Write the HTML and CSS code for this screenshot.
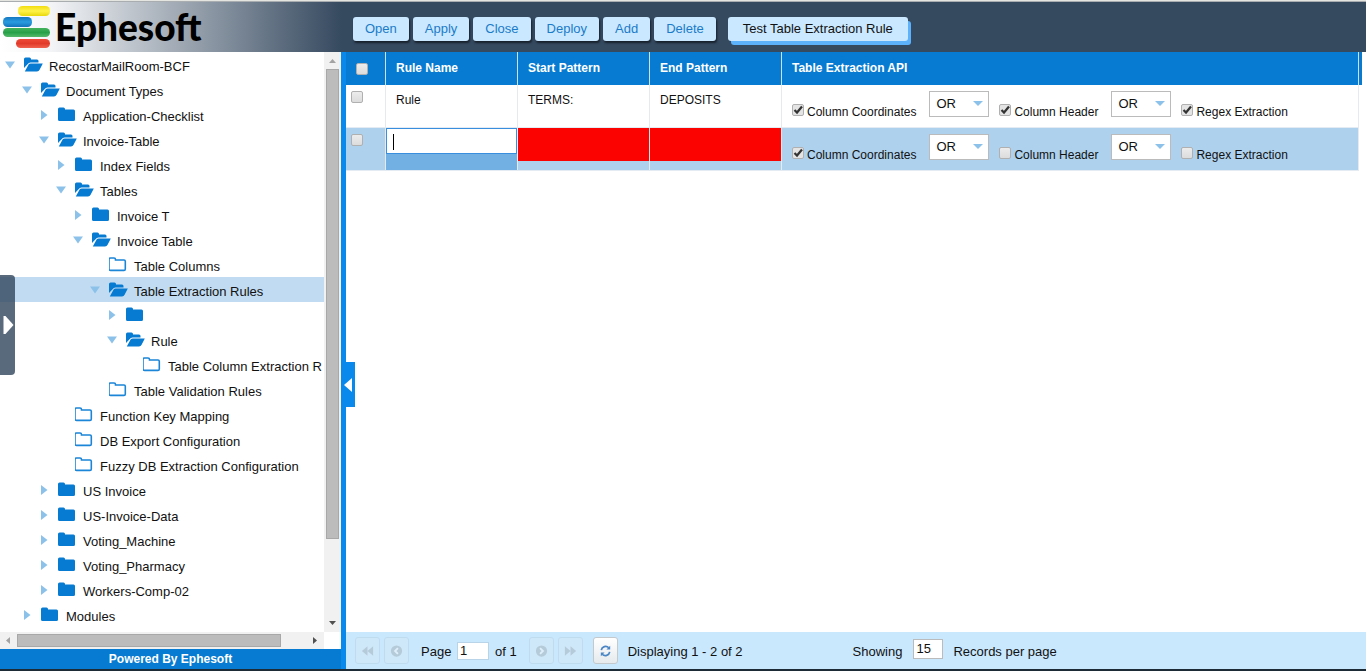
FILE: index.html
```html
<!DOCTYPE html>
<html lang="en">
<head>
<meta charset="utf-8">
<title>Ephesoft - Table Extraction Rules</title>
<link rel="stylesheet" href="styles.css">
</head>
<body>
<svg class="defs" aria-hidden="true">
  <symbol id="open" viewBox="0 0 19 15"><path fill="#077bd1" d="M0 11V2Q0 .5 1.500 .5H5.500Q7 .5 7 2V2.500H13Q14.500 2.500 14.500 4V5.500H6.500Q4.600 5.500 3.800 7ZM.8 14.500L4.600 7.500Q5.200 6.500 6.800 6.500H18.800L15.600 12.800Q14.800 14.500 13 14.500Z"/></symbol>
  <symbol id="closed" viewBox="0 0 19 15"><path fill="#077bd1" d="M0 2Q0 .5 1.500 .5H5.500Q7 .5 7 2V2.500H15.500Q17 2.500 17 4V12.500Q17 14 15.500 14H1.500Q0 14 0 12.500Z"/></symbol>
  <symbol id="leaf" viewBox="0 0 19 15"><path fill="#fff" stroke="#1b85d8" stroke-width="1.600" d="M0 2.500Q0 1 1.500 1H5Q6.500 1 6.500 2.500V3H15Q16.300 3 16.300 4.300V12Q16.300 13.400 15 13.400H1.500Q0 13.400 0 12Z"/></symbol>
  <symbol id="down" viewBox="0 0 10 10"><path fill="#8cc2ea" d="M0 1.500H10L5 8.500Z"/></symbol>
  <symbol id="right" viewBox="0 0 10 10"><path fill="#8cc2ea" d="M2 0L8.500 5L2 10Z"/></symbol>
</svg>

<header class="topbar">
  <div class="brand">
    <svg class="brand-mark" viewBox="0 0 48 44" aria-hidden="true">
      <defs>
        <linearGradient id="gy" x2="0" y2="1"><stop offset="0" stop-color="#f2dc10"/><stop offset=".5" stop-color="#fff34a"/><stop offset="1" stop-color="#e8d80c"/></linearGradient>
        <linearGradient id="gb" x2="0" y2="1"><stop offset="0" stop-color="#1577c0"/><stop offset=".5" stop-color="#2a9ce0"/><stop offset="1" stop-color="#1472ba"/></linearGradient>
        <linearGradient id="gg" x2="0" y2="1"><stop offset="0" stop-color="#43b35c"/><stop offset=".5" stop-color="#27a048"/><stop offset="1" stop-color="#55b96a"/></linearGradient>
        <linearGradient id="gr" x2="0" y2="1"><stop offset="0" stop-color="#ee4a38"/><stop offset=".5" stop-color="#e23a2a"/><stop offset="1" stop-color="#f0604e"/></linearGradient>
      </defs>
      <rect x="15" y="1" width="32" height="10" rx="4.500" fill="url(#gy)"/>
      <rect x="0" y="12" width="29" height="10" rx="4.500" fill="url(#gb)"/>
      <rect x="0" y="23" width="47" height="9" rx="4.500" fill="url(#gg)"/>
      <rect x="13" y="34" width="34" height="9" rx="4.500" fill="url(#gr)"/>
    </svg>
    <span class="brand-name">Ephesoft</span>
  </div>
  <nav class="actions">
    <button>Open</button><button>Apply</button><button>Close</button><button>Deploy</button><button>Add</button><button>Delete</button><button class="test">Test Table Extraction Rule</button>
  </nav>
</header>

<div class="workspace">
  <aside class="sidebar">
    <div class="tree-area">
      <ul class="tree">
        <li class="l0"><svg class="arrow"><use href="#down"/></svg><svg class="folder"><use href="#open"/></svg><span>RecostarMailRoom-BCF</span></li>
        <li class="l1"><svg class="arrow"><use href="#down"/></svg><svg class="folder"><use href="#open"/></svg><span>Document Types</span></li>
        <li class="l2"><svg class="arrow"><use href="#right"/></svg><svg class="folder"><use href="#closed"/></svg><span>Application-Checklist</span></li>
        <li class="l2"><svg class="arrow"><use href="#down"/></svg><svg class="folder"><use href="#open"/></svg><span>Invoice-Table</span></li>
        <li class="l3"><svg class="arrow"><use href="#right"/></svg><svg class="folder"><use href="#closed"/></svg><span>Index Fields</span></li>
        <li class="l3"><svg class="arrow"><use href="#down"/></svg><svg class="folder"><use href="#open"/></svg><span>Tables</span></li>
        <li class="l4"><svg class="arrow"><use href="#right"/></svg><svg class="folder"><use href="#closed"/></svg><span>Invoice T</span></li>
        <li class="l4"><svg class="arrow"><use href="#down"/></svg><svg class="folder"><use href="#open"/></svg><span>Invoice Table</span></li>
        <li class="l5"><svg class="arrow"></svg><svg class="folder"><use href="#leaf"/></svg><span>Table Columns</span></li>
        <li class="l5 selected"><svg class="arrow"><use href="#down"/></svg><svg class="folder"><use href="#open"/></svg><span>Table Extraction Rules</span></li>
        <li class="l6"><svg class="arrow"><use href="#right"/></svg><svg class="folder"><use href="#closed"/></svg><span></span></li>
        <li class="l6"><svg class="arrow"><use href="#down"/></svg><svg class="folder"><use href="#open"/></svg><span>Rule</span></li>
        <li class="l7"><svg class="arrow"></svg><svg class="folder"><use href="#leaf"/></svg><span>Table Column Extraction R</span></li>
        <li class="l5"><svg class="arrow"></svg><svg class="folder"><use href="#leaf"/></svg><span>Table Validation Rules</span></li>
        <li class="l3"><svg class="arrow"></svg><svg class="folder"><use href="#leaf"/></svg><span>Function Key Mapping</span></li>
        <li class="l3"><svg class="arrow"></svg><svg class="folder"><use href="#leaf"/></svg><span>DB Export Configuration</span></li>
        <li class="l3"><svg class="arrow"></svg><svg class="folder"><use href="#leaf"/></svg><span>Fuzzy DB Extraction Configuration</span></li>
        <li class="l2"><svg class="arrow"><use href="#right"/></svg><svg class="folder"><use href="#closed"/></svg><span>US Invoice</span></li>
        <li class="l2"><svg class="arrow"><use href="#right"/></svg><svg class="folder"><use href="#closed"/></svg><span>US-Invoice-Data</span></li>
        <li class="l2"><svg class="arrow"><use href="#right"/></svg><svg class="folder"><use href="#closed"/></svg><span>Voting_Machine</span></li>
        <li class="l2"><svg class="arrow"><use href="#right"/></svg><svg class="folder"><use href="#closed"/></svg><span>Voting_Pharmacy</span></li>
        <li class="l2"><svg class="arrow"><use href="#right"/></svg><svg class="folder"><use href="#closed"/></svg><span>Workers-Comp-02</span></li>
        <li class="l1"><svg class="arrow"><use href="#right"/></svg><svg class="folder"><use href="#closed"/></svg><span>Modules</span></li>
        <li class="l1"><svg class="arrow"></svg><svg class="folder"><use href="#closed"/></svg><span></span></li>
      </ul>
      <div class="scroll-y" aria-hidden="true">
        <svg viewBox="0 0 17 17"><path fill="#a3a3a3" d="M5 11H12L8.500 7Z"/></svg>
        <div class="track"><div class="thumb"></div></div>
        <svg viewBox="0 0 17 17"><path fill="#505050" d="M5 6H12L8.500 10Z"/></svg>
      </div>
      <div class="scroll-x" aria-hidden="true">
        <svg viewBox="0 0 17 17"><path fill="#a3a3a3" d="M10 5V12L6 8.500Z"/></svg>
        <div class="track"><div class="thumb"></div></div>
        <svg viewBox="0 0 17 17"><path fill="#505050" d="M6 5V12L10 8.500Z"/></svg>
      </div>
    </div>
    <footer class="powered">Powered By Ephesoft</footer>
    <button class="drawer" aria-label="Open drawer"><svg viewBox="0 0 10 18"><path fill="#fff" d="M0 0H2L10 9L2 18H0Z"/></svg></button>
  </aside>

  <main class="content">
    <button class="collapse" aria-label="Collapse panel"><svg viewBox="0 0 9 14"><path fill="#fff" d="M8 0V14L0 7Z"/></svg></button>
    <div class="grid-area">
      <table class="rules">
        <colgroup><col class="c-check"><col class="c-text"><col class="c-text"><col class="c-text"><col><col class="c-end"></colgroup>
        <thead>
          <tr><th class="pick"><input type="checkbox" aria-label="Select all"></th><th>Rule Name</th><th>Start Pattern</th><th>End Pattern</th><th>Table Extraction API</th><th class="end"></th></tr>
        </thead>
        <tbody>
          <tr>
            <td class="pick"><input type="checkbox" aria-label="Select Rule"></td>
            <td>Rule</td><td>TERMS:</td><td>DEPOSITS</td>
            <td class="api"><div class="api-row">
              <label><input type="checkbox" checked>Column Coordinates</label>
              <span class="pickbox"><select aria-label="First operator"><option>OR</option><option>AND</option></select></span>
              <label><input type="checkbox" checked>Column Header</label>
              <span class="pickbox"><select aria-label="Second operator"><option>OR</option><option>AND</option></select></span>
              <label><input type="checkbox" checked>Regex Extraction</label>
            </div></td>
            <td class="end"></td>
          </tr>
          <tr class="active">
            <td class="pick"><input type="checkbox" aria-label="Select new rule"></td>
            <td class="editing"><div class="editor"><input type="text" aria-label="Rule name"><span class="caret"></span></div></td>
            <td class="invalid"><div></div></td><td class="invalid"><div></div></td>
            <td class="api"><div class="api-row">
              <label><input type="checkbox" checked>Column Coordinates</label>
              <span class="pickbox"><select aria-label="First operator"><option>OR</option><option>AND</option></select></span>
              <label><input type="checkbox">Column Header</label>
              <span class="pickbox"><select aria-label="Second operator"><option>OR</option><option>AND</option></select></span>
              <label><input type="checkbox">Regex Extraction</label>
            </div></td>
            <td class="end"></td>
          </tr>
        </tbody>
      </table>
    </div>
    <div class="pager">
      <div class="pager-group nav">
        <button disabled aria-label="First page"><svg viewBox="0 0 16 16"><path fill="#b5cbda" d="M8 3V13L2 8ZM14 3V13L8 8Z"/></svg></button>
        <button disabled aria-label="Previous page"><svg viewBox="0 0 16 16"><circle cx="8" cy="8" r="6" fill="#b5cbda"/><path fill="none" stroke="#dfeffa" stroke-width="2" d="M9.500 5L6.500 8L9.500 11"/></svg></button>
      </div>
      <label class="page">Page <input type="text" value="1"></label><span class="of">of 1</span>
      <div class="pager-group nav">
        <button disabled aria-label="Next page"><svg viewBox="0 0 16 16"><circle cx="8" cy="8" r="6" fill="#b5cbda"/><path fill="none" stroke="#dfeffa" stroke-width="2" d="M6.500 5L9.500 8L6.500 11"/></svg></button>
        <button disabled aria-label="Last page"><svg viewBox="0 0 16 16"><path fill="#b5cbda" d="M2 3V13L8 8ZM8 3V13L14 8Z"/></svg></button>
      </div>
      <button class="refresh" aria-label="Refresh"><svg viewBox="0 0 16 16"><path fill="none" stroke="#4a86c4" stroke-width="1.800" d="M3.500 7A4.700 4.700 0 0 1 11.500 4.500M12.500 9A4.700 4.700 0 0 1 4.500 11.500"/><path fill="#4a86c4" d="M13 2.500V6.500H9ZM3 13.500V9.500H7Z"/></svg></button>
      <span class="status">Displaying 1 - 2 of 2</span>
      <label class="size" for="page-size">Showing</label>
      <input class="size-input" id="page-size" type="text" value="15">
      <span class="size">Records per page</span>
    </div>
  </main>
</div>
</body>
</html>
```
FILE: styles.css
```css
* { box-sizing: border-box; }
body {
  margin: 0;
  height: 100vh;
  display: flex;
  flex-direction: column;
  overflow: hidden;
  border-top: 1px solid #e4e4e0;
  border-bottom: 2px solid #1d2b36;
  background: #fff;
  font: 13px/16px "Liberation Sans", Arial, sans-serif;
  color: #111;
}
button, input, select { font: inherit; color: inherit; margin: 0; }
.defs { position: absolute; width: 0; height: 0; }

/* top bar */
.topbar {
  flex: none;
  display: flex;
  align-items: center;
  height: 51px;
  border-top: 1px solid #a9adaf;
  background: linear-gradient(to right, #fff 0, #f4f5f7 50px, #35495f 342px);
}
.brand { display: flex; align-items: center; width: 353px; padding-left: 3px; gap: 4px; }
.brand-mark { width: 48px; height: 44px; }
.brand-name { font: 900 37px/44px Lato, "Open Sans", sans-serif; color: #000; }
.actions { display: flex; gap: 4px; padding-top: 4px; }
.actions button {
  height: 24px;
  padding: 0 12px;
  border: 0;
  border-radius: 3px;
  background: #cae8ff;
  color: #1a7bc8;
  box-shadow: 1px 2px 2px #17212c;
}
.actions .test { margin-left: 8px; padding: 0 15px; color: #111; box-shadow: 3px 4px 0 #5cb3fb; }

/* sidebar */
.workspace { flex: 1; min-height: 0; display: flex; }
.sidebar { position: relative; flex: none; width: 341px; display: flex; flex-direction: column; }
.tree-area { flex: 1; min-height: 0; display: grid; grid-template: minmax(0, 1fr) 17px / minmax(0, 1fr) 17px; }
.tree { margin: 0; padding: 0; list-style: none; overflow: hidden; }
.tree li { display: flex; align-items: center; height: 25px; padding-left: 5px; white-space: nowrap; overflow: hidden; }
.tree span { padding-top: 4px; }
.arrow { flex: none; width: 10px; height: 10px; margin-right: 9px; }
.folder { flex: none; width: 19px; height: 15px; margin-right: 6px; overflow: visible; }
.tree .l1 { padding-left: 22px; }
.tree .l2 { padding-left: 39px; }
.tree .l3 { padding-left: 56px; }
.tree .l4 { padding-left: 73px; }
.tree .l5 { padding-left: 90px; }
.tree .l6 { padding-left: 107px; }
.tree .l7 { padding-left: 124px; }
.tree .selected { background: #c1dcf2; }
.scroll-y, .scroll-x { display: flex; background: #f1f1f1; }
.scroll-y { flex-direction: column; }
.scroll-y svg, .scroll-x svg { flex: none; width: 17px; height: 17px; }
.track { flex: 1; }
.thumb { background: #bcbcbc; border: 1px solid #a8a8a8; }
.scroll-y .thumb { height: 86%; margin: 0 2px; }
.scroll-x .thumb { width: 91%; height: 13px; margin-top: 2px; }
.powered { height: 20px; background: #077bd1; color: #fff; font-weight: 700; font-size: 12px; line-height: 20px; text-align: center; }
.drawer {
  position: absolute;
  left: 0;
  top: 223px;
  width: 15px;
  height: 100px;
  padding: 0 1px 0 3px;
  border: 0;
  border-radius: 0 4px 4px 0;
  background: rgba(53, 73, 95, .82);
}
.drawer svg { display: block; width: 11px; height: 18px; }

/* content */
.content { position: relative; flex: 1; min-width: 0; display: flex; flex-direction: column; border-left: 5px solid #0889eb; }
.collapse { position: absolute; left: 0; top: 310px; width: 9px; height: 45px; padding: 0; border: 0; background: #0889eb; }
.collapse svg { display: block; width: 9px; height: 14px; margin-left: -2px; }
.grid-area { flex: 1; padding-right: 4px; }
.rules { width: 100%; border-collapse: separate; border-spacing: 0; table-layout: fixed; }
.c-check { width: 40px; }
.c-text { width: 132px; }
.c-end { width: 3px; }
.rules th { height: 33px; padding: 0 10px 2px; background: #077bd1; color: #fff; font-size: 12px; text-align: left; border-right: 1px solid #cfe0ee; }
.rules td { height: 43px; padding: 6px 10px; vertical-align: top; border-right: 1px solid #e6eaee; border-bottom: 1px solid #e4ebf2; font-size: 12px; line-height: 18px; }
.rules th.end, .rules td.end { padding: 0; border: 0; }
.rules .pick { padding-left: 5px; }
.rules th.pick { padding: 0 8px 0 10px; }
.pick input { display: block; }
.active td { background: #aed1ee; }
.active td.end { background: #fff; }
.rules .editing { padding: 0; background: #72afe2; }
.editor { position: relative; }
.editor input { display: block; width: 100%; height: 26px; padding: 0 6px; border: 1px solid #3a8ede; background: #fff; }
.caret { position: absolute; left: 7px; top: 6px; width: 1px; height: 16px; background: #000; }
.rules .invalid { padding: 0; }
.invalid div { height: 33px; background: #fb0300; }
input[type="checkbox"] {
  appearance: none;
  flex: none;
  width: 12px;
  height: 12px;
  border: 1px solid #b0b0b0;
  border-radius: 2px;
  background: linear-gradient(#ececec, #dcdcdc);
}
input[type="checkbox"]:checked {
  background: url("data:image/svg+xml,%3Csvg xmlns='http://www.w3.org/2000/svg' viewBox='0 0 10 10'%3E%3Cpath d='M1.500 5L4 7.500L9 1.500' fill='none' stroke='%23333' stroke-width='2.200'/%3E%3C/svg%3E") center / 10px 10px no-repeat, #e4e4e4;
}
.api-row { display: flex; align-items: flex-end; gap: 10px; height: 30px; white-space: nowrap; }
.api-row label { display: flex; align-items: flex-end; gap: 3px; padding-right: 3px; height: 18px; }
.api-row label input { align-self: flex-start; margin-top: 1px; }
.pickbox { position: relative; align-self: flex-start; width: 60px; height: 26px; }
.pickbox::after {
  content: "";
  position: absolute;
  right: 6px;
  top: 10px;
  border: 5px solid transparent;
  border-top-color: #8cc2ea;
  border-bottom: 0;
  pointer-events: none;
}
.pickbox select { appearance: none; display: block; width: 100%; height: 100%; padding: 0 6px; border: 1px solid #bbb; border-radius: 0; background: #fff; font-size: 13px; }

/* pager */
.pager { display: flex; align-items: center; height: 37px; padding: 0 9px; background: #c9e8fe; white-space: nowrap; }
.pager-group { display: flex; gap: 4px; }
.pager button { width: 25px; height: 27px; padding: 4px; border: 1px solid #bfdcef; border-radius: 3px; background: #cfe8f9; }
.pager button svg { display: block; width: 15px; height: 16px; }
.pager .refresh { margin: 0 10px; border-color: #c4c9cc; background: linear-gradient(#fff, #e6eaec); }
.pager input { height: 18px; border: 1px solid #b9d4e8; background: #fff; padding: 0 2px; }
.page { margin-left: 12px; }
.page input { width: 32px; margin-left: 2px; }
.of { margin: 0 12px 0 6px; }
.of, .status, .size { padding-top: 3px; }
.status { margin-right: 110px; }
.pager .size-input { width: 30px; height: 20px; margin: 0 10px 4px 11px; border-color: #bbb; }
```
